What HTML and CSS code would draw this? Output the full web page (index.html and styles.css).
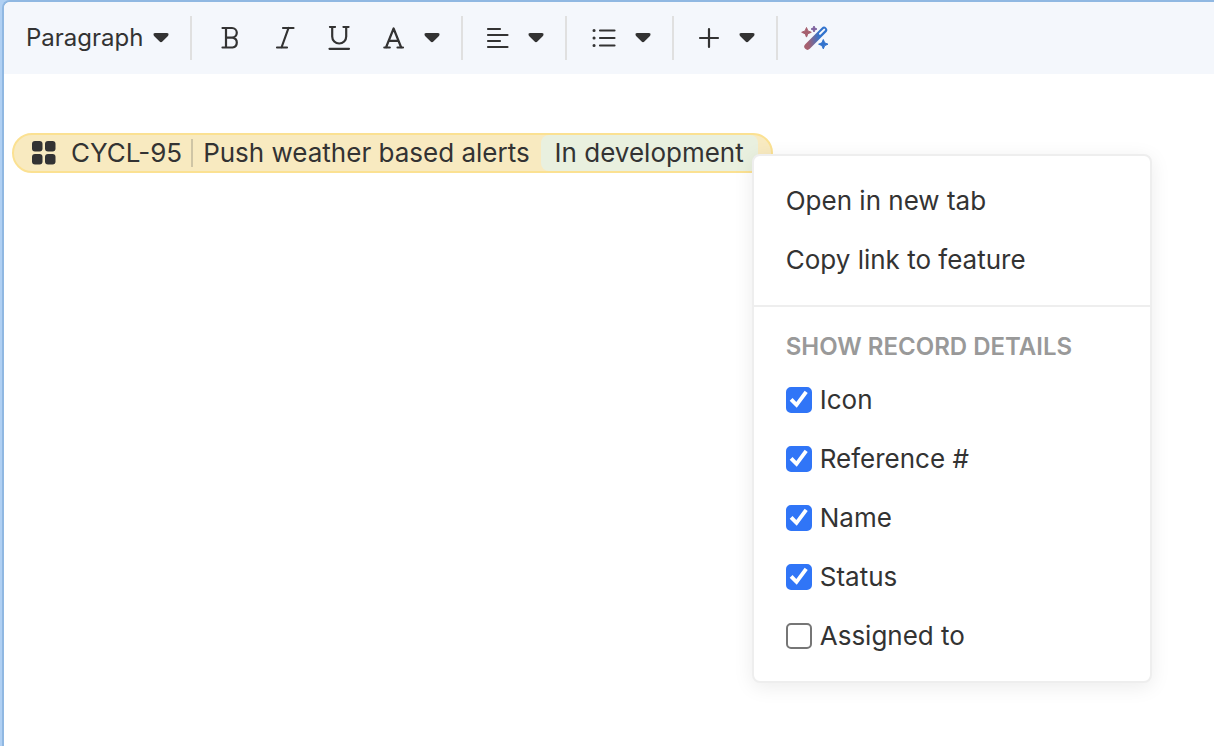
FILE: index.html
```html
<!DOCTYPE html>
<html lang="en">
<head>
<meta charset="utf-8">
<title>Editor</title>
<link rel="stylesheet" href="styles.css">
</head>
<body>
<svg class="defs" aria-hidden="true">
<symbol id="caret" viewBox="0 0 16 10"><path d="M2 0h12q2 0 1.500 2q-.2.6-.8 1.200L9.400 8.600q-1.400 1.200-2.800 0L1.300 3.200Q.7 2.600.5 2Q0 0 2 0z"/></symbol>
</svg>
<div class="editor">
<div class="toolbar">
<div class="group">
<button class="tool">Paragraph <svg class="caret"><use href="#caret"/></svg></button>
</div>
<div class="group letters">
<button class="tool" aria-label="Bold">
<svg class="icon" viewBox="0 0 24 24"><path d="M3.500 2h9.500a4.800 4.800 0 0 1 0 9.600H7M13.500 11.600a5 5 0 0 1 0 9.900H3.500M7 2v19.500"/></svg>
</button>
<button class="tool" aria-label="Italic">
<svg class="icon" viewBox="0 0 24 24"><path d="M10 2h10.500M4 21.500H14M15.500 2l-7 19.500"/></svg>
</button>
<button class="tool" aria-label="Underline">
<svg class="icon" viewBox="0 0 24 24"><path d="M3 1h5M16.500 1h5M5.200 1v9.500a7 7 0 0 0 14 0V1M2.500 22.800h19.500"/></svg>
</button>
<button class="tool" aria-label="Text color">
<svg class="icon color" viewBox="0 0 25 24"><path d="M3.300 21.500h5.500M16.500 21.500h5.500M5 21.500L12.600 2.500L20.200 21.500M7.800 14.800h9.600"/></svg>
<svg class="caret"><use href="#caret"/></svg>
</button>
</div>
<div class="group">
<button class="tool" aria-label="Align">
<svg class="icon" viewBox="0 0 24 24"><path d="M2 3h12M2 9h19.500M2 15h12M2 21h19.500"/></svg>
<svg class="caret"><use href="#caret"/></svg>
</button>
</div>
<div class="group">
<button class="tool" aria-label="List">
<svg class="icon list" viewBox="0 0 27 24"><path d="M10 4.500h14.500M10 12h14.500M10 19.500h14.500"/><path class="dots" d="M4 4.500h.1M4 12h.1M4 19.500h.1"/></svg>
<svg class="caret"><use href="#caret"/></svg>
</button>
</div>
<div class="group">
<button class="tool" aria-label="Insert">
<svg class="icon" viewBox="0 0 24 24"><path d="M12 3v18M3 12h18"/></svg>
<svg class="caret"><use href="#caret"/></svg>
</button>
</div>
<div class="group">
<button class="tool" aria-label="Assistant">
<svg class="wand" viewBox="0 0 28 26">
<defs>
<linearGradient id="wandFill" gradientUnits="userSpaceOnUse" x1="6" y1="16" x2="19" y2="13">
<stop offset="0" stop-color="#a6606f"/>
<stop offset="1" stop-color="#3273cd"/>
</linearGradient>
</defs>
<path d="M6.500 21.500L23 5" stroke="url(#wandFill)" stroke-width="6.400" stroke-linecap="round"/>
<path d="M19 8.800L23.200 4.600" stroke="#f4f7fc" stroke-width="2" stroke-linecap="round"/>
<path fill="#a6606f" d="M5.500 2.500l1.400 3.400 3.400 1.400-3.400 1.400-1.400 3.400-1.400-3.400L.7 7.300l3.400-1.400z" stroke="#a6606f"/>
<path fill="#8064a0" d="M13 1l.9 2.100 2.100.9-2.100.9L13 7l-.9-2.100L10 4l2.100-.9z" stroke="#8064a0"/>
<path fill="#3273cd" d="M22.300 14.500l1.400 3.300 3.300 1.400-3.300 1.400-1.400 3.300-1.400-3.300-3.300-1.400 3.300-1.400z" stroke="#3273cd"/>
</svg>
</button>
</div>
</div>
<div class="content">
<div class="record">
<a class="pill" href="#">
<svg class="feature" viewBox="0 0 24 24"><rect width="10.500" height="10.500" rx="3"/><rect x="13" width="10.500" height="10.500" rx="3"/><rect y="13" width="10.500" height="10.500" rx="3"/><rect x="13" y="13" width="10.500" height="10.500" rx="3"/></svg>
<span class="reference">CYCL-95</span>
<span class="name">Push weather based alerts</span>
<span class="status">In development</span>
</a>
<div class="menu">
<div class="section">
<a class="item" href="#">Open in new tab</a>
<a class="item" href="#">Copy link to feature</a>
</div>
<div class="section">
<h2>Show record details</h2>
<label class="item"><input type="checkbox" checked>Icon</label>
<label class="item"><input type="checkbox" checked>Reference #</label>
<label class="item"><input type="checkbox" checked>Name</label>
<label class="item"><input type="checkbox" checked>Status</label>
<label class="item"><input type="checkbox">Assigned to</label>
</div>
</div>
</div>
</div>
</div>
</body>
</html>
```
FILE: styles.css
```css
* {
box-sizing: border-box;
}
body {
margin: 0;
padding-left: 2px;
background-color: #b0d0f3;
color: #333;
font-family: Inter, sans-serif;
font-size: 26px;
line-height: 32px;
}
a {
color: inherit;
text-decoration: none;
}
.defs {
display: none;
}
.editor {
min-height: 100vh;
border-top: 2px solid #90b8e2;
border-left: 2px solid #90b8e2;
border-top-left-radius: 8px;
background-color: white;
overflow: hidden;
}
.toolbar {
display: flex;
height: 72px;
align-items: center;
background-color: #f4f7fc;
}
.group {
display: flex;
height: 44px;
padding: 0 21px 0 23px;
border-right: 2px solid #e0e0e0;
}
.group:last-child {
border-right: none;
}
.letters {
gap: 30px;
padding-left: 27px;
}
.tool {
display: flex;
align-items: center;
gap: 18px;
padding: 0;
border: none;
background: none;
color: inherit;
font: inherit;
cursor: pointer;
}
.group:first-child {
padding-left: 22px;
}
.group:first-child .tool {
gap: 10px;
font-size: 24px;
}
.caret {
width: 16px;
height: 10px;
fill: #333;
}
.icon {
width: 24px;
height: 24px;
fill: none;
stroke: #333;
stroke-width: 2.2;
stroke-linecap: round;
stroke-linejoin: round;
}
.dots {
stroke-width: 3;
}
.color {
width: 25px;
}
.list {
width: 27px;
}
.wand {
width: 28px;
height: 26px;
}
.content {
padding: 59px 8px;
}
.record {
position: relative;
width: fit-content;
}
.pill {
display: flex;
height: 40px;
align-items: center;
padding: 0 13px 0 18px;
border: 2px solid #fbe192;
border-radius: 20px;
background-color: #f8eac0;
white-space: nowrap;
}
.feature {
width: 24px;
height: 24px;
margin-right: 15px;
fill: #333;
}
.reference {
padding-right: 9px;
border-right: 2px solid #cfc5a5;
line-height: 28px;
}
.name {
padding: 0 11px 0 10px;
}
.status {
padding: 0 14px;
border-radius: 8px;
background-color: #e9f0df;
line-height: 36px;
}
/* context menu, opens over the end of the pill */
.menu {
position: absolute;
top: 21px;
left: calc(100% - 21px);
width: 400px;
border: 2px solid #eee;
border-radius: 8px;
background-color: white;
box-shadow: 0 4px 20px rgba(0,0,0,0.08);
}
.section {
padding: 15px 32px 16px;
}
.section + .section {
border-top: 2px solid #eee;
}
.item {
display: flex;
align-items: center;
gap: 8px;
height: 59px;
}
h2 {
margin: 0;
padding-top: 2px;
color: #999;
font-size: 24px;
font-weight: 600;
line-height: 46px;
text-transform: uppercase;
white-space: nowrap;
}
input[type="checkbox"] {
appearance: none;
width: 26px;
height: 26px;
margin: 0;
border: 2px solid #767676;
border-radius: 5px;
background-color: white;
}
input[type="checkbox"]:checked {
border-color: #3075f7;
background-color: #3075f7;
}
input[type="checkbox"]:checked::before {
content: "";
display: block;
height: 22px;
background-color: white;
clip-path: polygon(9% 56%, 22% 43%, 39% 61%, 77% 10%, 91% 21%, 41% 87%);
}
```
